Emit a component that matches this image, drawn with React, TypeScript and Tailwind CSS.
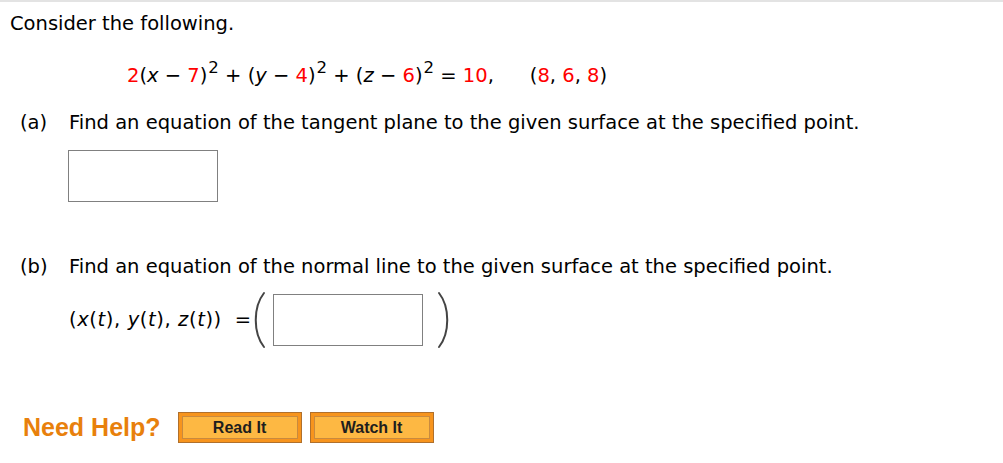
import React from "react";

function Red({ children }: { children: React.ReactNode }) {
  return <span className="text-[#ff0000]">{children}</span>;
}

function Sq() {
  return <sup className="text-[0.85em] -top-[0.55em] ml-[1px]">2</sup>;
}

function Paren({ flip }: { flip?: boolean }) {
  return (
    <svg width="14" height="58" viewBox="0 0 14 58" className={flip ? "-scale-x-100" : ""}>
      <path d="M12 2 C1 16 1 42 12 56" fill="none" stroke="#444" strokeWidth="2" strokeLinecap="round" />
    </svg>
  );
}

function HelpButton({ label }: { label: string }) {
  return (
    <button
      type="button"
      className="w-[124px] h-[31px] border border-[#b0702c] bg-[#f7941d] p-[3px]"
    >
      <div className="h-full w-full border border-[#c98a3e] bg-[#fdb843] flex items-center justify-center font-['Liberation_Sans'] font-bold text-[16px] text-[#1e1e1e] leading-none">
        {label}
      </div>
    </button>
  );
}

export default function App() {
  return (
    <div className="w-[1003px] h-[463px] bg-white border-t-2 border-[#e3e3e3] font-['DejaVu_Sans',sans-serif] text-[19.5px] text-black overflow-hidden">
      <div className="pl-[10px] pt-[10px] leading-[24px]">Consider the following.</div>

      <div className="pl-[127px] mt-[28px] leading-[24px] whitespace-pre">
        <Red>2</Red>(<i>x</i> − <Red>7</Red>)<Sq /> + (<i>y</i> − <Red>4</Red>)<Sq /> + (<i>z</i> − <Red>6</Red>)<Sq /> = <Red>10</Red>,
        <span className="ml-[36px]">
          (<Red>8</Red>, <Red>6</Red>, <Red>8</Red>)
        </span>
      </div>

      <div className="flex pl-[20px] mt-[23px] leading-[24px]">
        <span className="w-[49px]">(a)</span>
        <span>Find an equation of the tangent plane to the given surface at the specified point.</span>
      </div>
      <div className="pl-[68px] mt-[15px]">
        <div className="w-[150px] h-[52px] border border-[#808080]" />
      </div>

      <div className="flex pl-[20px] mt-[53px] leading-[24px]">
        <span className="w-[49px]">(b)</span>
        <span>Find an equation of the normal line to the given surface at the specified point.</span>
      </div>
      <div className="flex items-center pl-[69px] mt-[12px] leading-[24px]">
        <span className="tracking-[0.6px]">
          (<i>x</i>(<i>t</i>), <i>y</i>(<i>t</i>), <i>z</i>(<i>t</i>))
        </span>
        <span className="ml-[13px]">=</span>
        <div className="ml-[1px]">
          <Paren />
        </div>
        <div className="ml-[7px] w-[150px] h-[52px] border border-[#808080]" />
        <div className="ml-[14px]">
          <Paren flip />
        </div>
      </div>

      <div className="flex items-center pl-[23px] mt-[63px] gap-[8px]">
        <span className="font-['Liberation_Sans'] font-bold text-[25px] text-[#e8800c] leading-none mr-[9px]">
          Need Help?
        </span>
        <HelpButton label="Read It" />
        <HelpButton label="Watch It" />
      </div>
    </div>
  );
}
